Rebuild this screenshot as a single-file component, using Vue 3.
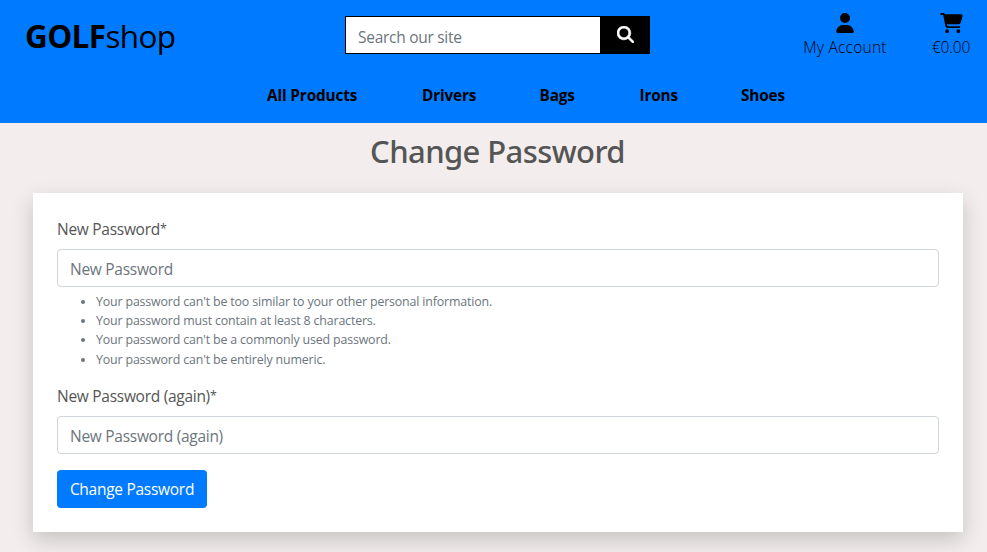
<script setup>
const links = [
  { label: 'All Products', width: 91 },
  { label: 'Drivers', width: 53.5 },
  { label: 'Bags', width: 36 },
  { label: 'Irons', width: 37.5 },
  { label: 'Shoes', width: 44 },
]
const hints = [
  "Your password can't be too similar to your other personal information.",
  'Your password must contain at least 8 characters.',
  "Your password can't be a commonly used password.",
  "Your password can't be entirely numeric.",
]
</script>

<template>
  <div class="page">
    <header class="header">
      <div class="top">
        <a class="logo"><strong>GOLF</strong><span>shop</span></a>
        <form class="search" @submit.prevent>
          <input type="text" placeholder="Search our site" />
          <button type="submit" aria-label="Search">
            <svg width="17" height="17" viewBox="0 0 512 512" fill="#fff" stroke="#fff" stroke-width="16"><path d="M416 208c0 45.900-14.900 88.300-40 122.700L502.600 457.400c12.500 12.500 12.500 32.800 0 45.300s-32.800 12.500-45.300 0L330.700 376c-34.400 25.200-76.800 40-122.700 40C93.100 416 0 322.900 0 208S93.100 0 208 0S416 93.100 416 208zM208 352a144 144 0 1 0 0-288 144 144 0 1 0 0 288z" /></svg>
          </button>
        </form>
        <div class="actions">
          <a class="action account">
            <svg width="18" height="20" viewBox="0 0 448 512"><path d="M224 256A128 128 0 1 0 224 0a128 128 0 1 0 0 256zm-45.700 48C79.800 304 0 383.800 0 482.300C0 498.700 13.300 512 29.700 512H418.300c16.400 0 29.700-13.300 29.700-29.700C448 383.800 368.200 304 269.700 304H178.300z" /></svg>
            <span>My Account</span>
          </a>
          <a class="action cart">
            <svg width="23" height="20" viewBox="0 0 576 512"><path d="M0 24C0 10.700 10.700 0 24 0H69.500c22 0 41.500 12.800 50.600 32h411c26.300 0 45.500 25 38.600 50.400l-41 152.300c-8.500 31.400-37 53.300-69.500 53.300H170.700l5.400 28.500c2.200 11.300 12.100 19.500 23.600 19.500H488c13.300 0 24 10.700 24 24s-10.700 24-24 24H199.700c-34.600 0-64.300-24.600-70.700-58.500L77.400 54.500c-.7-3.800-4-6.500-7.900-6.500H24C10.700 48 0 37.300 0 24zM128 464a48 48 0 1 1 96 0 48 48 0 1 1-96 0zm336-48a48 48 0 1 1 0 96 48 48 0 1 1 0-96z" /></svg>
            <span>€0.00</span>
          </a>
        </div>
      </div>
      <nav class="nav">
        <a v-for="link in links" :key="link.label" :style="{ width: link.width + 'px' }">{{ link.label }}</a>
      </nav>
    </header>
    <main>
      <h2>Change Password</h2>
      <form class="card" @submit.prevent>
        <label for="pw1">New Password<span class="star">*</span></label>
        <input id="pw1" class="field" type="password" placeholder="New Password" />
        <ul>
          <li v-for="hint in hints" :key="hint">{{ hint }}</li>
        </ul>
        <label for="pw2">New Password (again)<span class="star">*</span></label>
        <input id="pw2" class="field" type="password" placeholder="New Password (again)" />
        <button class="submit" type="submit">Change Password</button>
      </form>
    </main>
  </div>
</template>

<style>
body {
  background: #f3eded;
}
</style>

<style scoped>
* {
  box-sizing: border-box;
}
.page {
  height: 552px;
  overflow: hidden;
  background: #f3eded;
  color: #555;
  font: 400 15.5px/24px "Open Sans", "Noto Sans", sans-serif;
  letter-spacing: -0.28px;
}
input,
button {
  font: inherit;
  letter-spacing: inherit;
}
.header {
  height: 123px;
  background: #007bff;
  color: #000;
}
.top {
  display: flex;
  height: 83px;
}
.logo {
  width: 345px;
  padding: 12px 0 0 25px;
  font-size: 31.5px;
  line-height: 48px;
  letter-spacing: -0.65px;
  white-space: nowrap;
}
.search {
  display: flex;
  width: 305px;
  height: 38px;
  margin-top: 16px;
}
.search input {
  width: 256px;
  padding: 3px 12px 0;
  border: 1px solid #000;
  border-radius: 0;
  background: #fff;
}
.search button {
  display: flex;
  width: 49px;
  padding: 10px 0 0 16px;
  border: 0;
  background: #000;
}
input::placeholder {
  color: #6c757d;
  opacity: 1;
}
.actions {
  display: flex;
  flex: 1;
  justify-content: flex-end;
  gap: 45px;
  padding: 13px 17px 0 0;
}
.action {
  display: flex;
  flex-direction: column;
  align-items: center;
  font-weight: 300;
  letter-spacing: 0.25px;
  white-space: nowrap;
}
.action span {
  margin-top: 2px;
}
.account {
  width: 84px;
}
.cart {
  width: 38px;
}
.cart span {
  letter-spacing: -0.2px;
}
.nav {
  display: flex;
  gap: 64px;
  padding-left: 267px;
  font-size: 15.3px;
  font-weight: 700;
  letter-spacing: -0.13px;
}
.nav a {
  white-space: nowrap;
}
h2 {
  margin: 9px 0 22px;
  padding-left: 8px;
  font-family: "Noto Sans", "Open Sans", sans-serif;
  font-size: 31px;
  font-weight: 500;
  line-height: 39px;
  letter-spacing: -0.6px;
  text-align: center;
}
.card {
  height: 339px;
  margin: 0 24px 0 33px;
  padding: 24px;
  background: #fff;
  box-shadow: 0 8px 20px rgba(0, 0, 0, 0.18);
}
label {
  display: block;
  margin-bottom: 8px;
}
.star {
  font-size: 12.5px;
  line-height: 1;
  vertical-align: 2px;
}
.field {
  display: block;
  width: 100%;
  height: 38px;
  padding: 2px 12px 0;
  border: 1px solid #ced4da;
  border-radius: 4px;
  background: #fff;
}
ul {
  margin: 5px 0 15px;
  padding-left: 39px;
  color: #6c757d;
  font-size: 12.4px;
  line-height: 19.2px;
  letter-spacing: -0.16px;
}
.submit {
  width: 150px;
  height: 38px;
  margin-top: 16px;
  padding: 1px 0 0;
  border: 0;
  border-radius: 4px;
  background: #007bff;
  color: #fff;
  white-space: nowrap;
}
</style>
